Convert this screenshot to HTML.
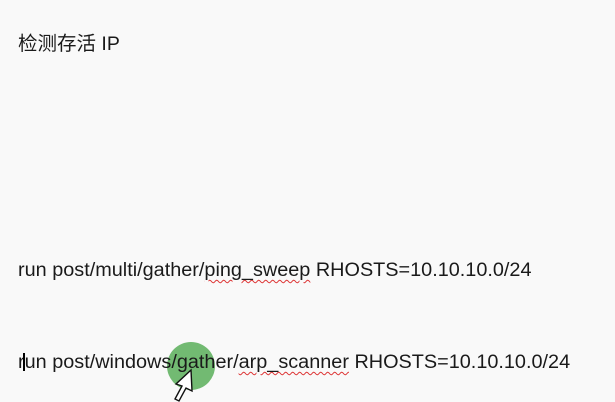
<!DOCTYPE html>
<html><head><meta charset="utf-8">
<style>
html,body{margin:0;padding:0}
body{width:615px;height:400px;background:#f9f9f9;position:relative;overflow:hidden;font-family:"Liberation Sans","Noto Sans CJK SC",sans-serif;color:#1a1a1a}
.h{position:absolute;left:18px;top:27px;font-size:19.5px;}
.l{position:absolute;left:18px;font-size:19.85px;white-space:nowrap;z-index:2}
.sq{text-decoration:underline wavy #d33;text-decoration-thickness:1px;text-underline-offset:3px}
.c{position:absolute;left:167px;top:342px;width:48px;height:48px;border-radius:50%;background:rgba(90,175,90,0.85);z-index:1}
</style></head><body>
<div class="h">检测存活 IP</div>
<div class="c"></div>
<div class="l" style="top:259px">run post/multi/gather/<span class="sq">ping_sweep</span> RHOSTS=10.10.10.0/24</div>
<div class="l" style="top:351px">run post/windows/gather/<span class="sq">arp_scanner</span> RHOSTS=10.10.10.0/24</div>
<div style="position:absolute;left:23px;top:353px;width:2px;height:18px;background:#000;z-index:3"></div>
<svg style="position:absolute;left:170px;top:368px;z-index:3" width="30" height="34" viewBox="0 0 30 34">
<path d="M21 2 L22 23 L16 20 L9 33 L5 31 L12 18 L6 16 Z" fill="#fff" stroke="#111" stroke-width="1.4"/>
</svg>
</body></html>
